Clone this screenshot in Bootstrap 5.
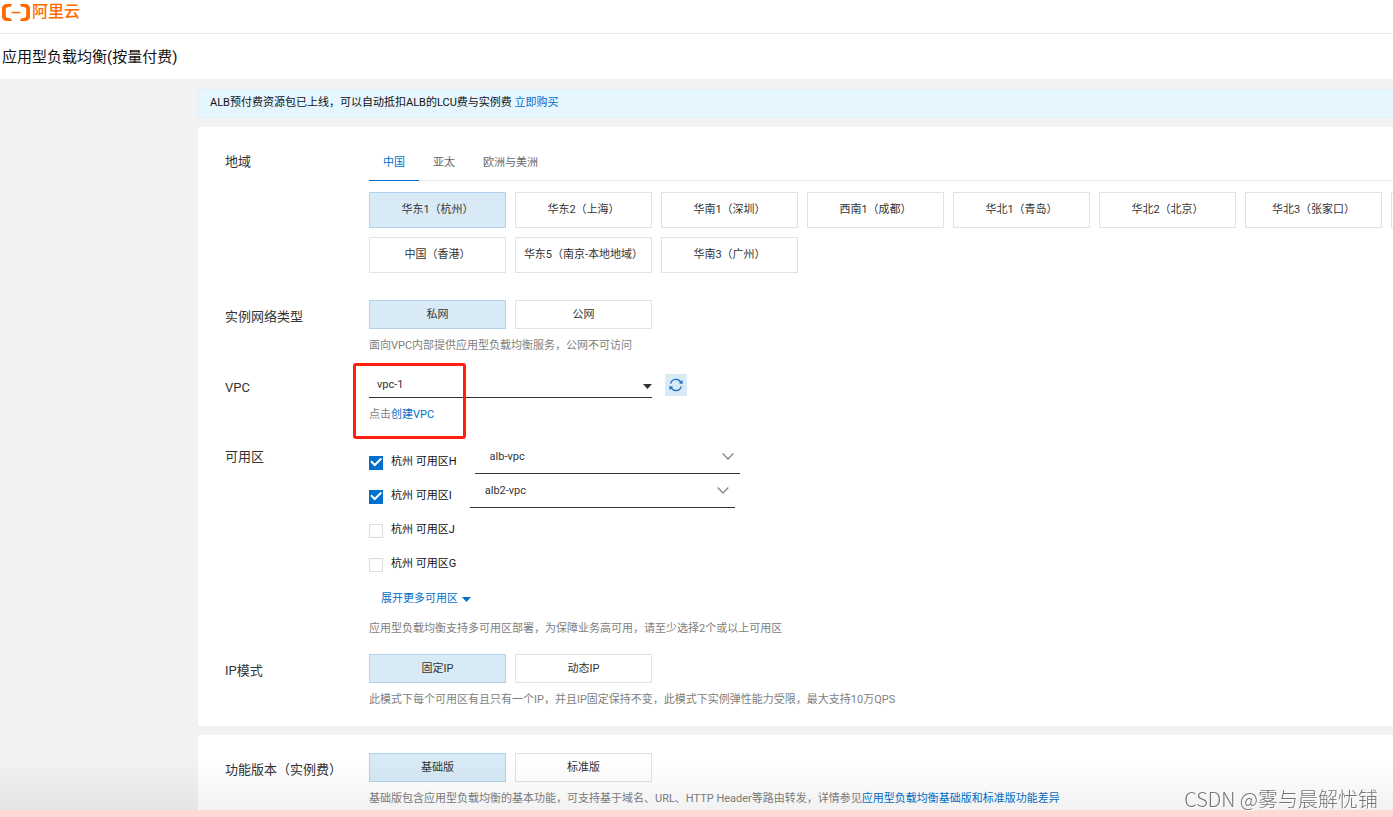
<!DOCTYPE html>
<html lang="zh-CN">
<head>
<meta charset="utf-8">
<meta name="viewport" content="width=device-width, initial-scale=1">
<title>应用型负载均衡(按量付费)</title>
<link href="https://cdn.jsdelivr.net/npm/bootstrap@5.3.0/dist/css/bootstrap.min.css" rel="stylesheet">
<script defer src="https://cdn.jsdelivr.net/npm/bootstrap@5.3.0/dist/js/bootstrap.bundle.min.js"></script>
<style>
  body { font: 11px/20px Roboto, "Noto Sans CJK SC", sans-serif; color: #333; background: #f1f2f4; overflow-x: hidden; }
  a { color: #0070cc; text-decoration: none; }
  .site-head { height: 34px; border-bottom: 1px solid #ebebeb; padding-left: 2px; }
  .brand { color: #ff6a00; font-size: 16px; font-weight: 500; line-height: 24px; gap: 2px; }
  .page-title { font-size: 15px; line-height: 43px; padding: 2px 0 0 2px; color: #111; font-weight: 400; }
  .content-area { margin-left: 198px; padding-top: 10px; gap: 9px; overflow: hidden; }
  .notice { background: #e5f6ff; border: 1px solid #e3edf2; border-right: 0; padding: 3px 11px 4px; color: #111; }
  .panel { background: #fff; padding: 17px 0 16px 27px; }
  .panel-edition { padding: 18px 0 0 27px; }
  .form-line { display: flex; margin-bottom: 15px; }
  .form-line.region-line { margin-bottom: 27px; }
  .form-line:last-child { margin-bottom: 0; }
  .field-label { width: 144px; font-size: 13px; padding-top: 7px; color: #333; }
  .region-line .field-label { padding-top: 8px; }
  .field-body { min-width: 0; }
  .region-tabs { border-bottom: 1px solid #e6e8eb; margin-bottom: 11px; }
  .region-tabs .nav-link { padding: 2px 14px 0; line-height: 34px; color: #666; border-radius: 0; margin-bottom: -1px; border-bottom: 1px solid transparent; }
  .region-tabs .nav-link.active { color: #0070cc; border-color: #0070cc; }
  .tile-grid { display: grid; grid-template-columns: repeat(8, 137px); gap: 9px; }
  .tile { height: 29px; padding: 0; border: 1px solid #e1e2e3; border-radius: 0; background: #fff; color: #333; font-size: 11px; line-height: 20px; }
  .tile.active { background: #d8eaf6 !important; border-color: #b1d2ec !important; color: #333 !important; }
  .tile-tall .tile { height: 36px; }
  .hint { color: #808080; margin: 7px 0 0; }
  .line-select { border: 0; border-bottom: 1px solid #333; border-radius: 0; font-size: 11px; line-height: 20px; color: #333; background-color: transparent; }
  .vpc-select { width: 283px; height: 27px; padding: 1px 20px 0 8px; background-size: 9px 5px; background-position: right 0 top 13px;
    background-image: url("data:image/svg+xml,%3Csvg xmlns='http://www.w3.org/2000/svg' viewBox='0 0 9 5'%3E%3Cpath fill='%23333' d='M0 0h9L4.5 5z'/%3E%3C/svg%3E"); }
  .zone-select { width: 265px; height: 34px; padding: 0 24px 0 15px; margin-left: 18px; background-size: 12px 7px; background-position: right 6px center;
    background-image: url("data:image/svg+xml,%3Csvg xmlns='http://www.w3.org/2000/svg' viewBox='0 0 12 7'%3E%3Cpath fill='none' stroke='%23888' stroke-width='1.4' d='M.7.6 6 6 11.300.6'/%3E%3C/svg%3E"); }
  .refresh { width: 22px; height: 22px; background: #d8eaf6; color: #1a6fc4; border: 0; border-radius: 0; margin: 3px 0 0 13px; padding: 0; }
  .highlight { position: absolute; inset: -8px auto -14px -16px; width: 113px; border: 3px solid #ff2010; border-radius: 3px; pointer-events: none; }
  .zone-row { height: 34px; }
  .zone-row label { padding-top: 12px; color: #111; }
  .zone-box { width: 14px; height: 14px; margin: 16px 8px 0 0; border: 1px solid #dcdcdc; border-radius: 0 !important; }
  .zone-box:checked { background-color: #0070cc; border-color: #0070cc; background-size: 12px 12px;
    background-image: url("data:image/svg+xml,%3Csvg xmlns='http://www.w3.org/2000/svg' viewBox='0 0 12 12'%3E%3Cpath fill='none' stroke='%23fff' stroke-width='2' d='M1 4.300 4.800 8 11.300 1.500'/%3E%3C/svg%3E"); }
  .more-zones { margin: 13px 0 10px 12px; gap: 4px; }
  .bottom-fade { height: 50px; bottom: 7px; background: linear-gradient(transparent, rgba(0,0,0,.05)); pointer-events: none; }
  .bottom-strip { height: 7px; background: #ffd9d6; }
  .watermark { position: fixed; right: 15px; bottom: 3px; font: 300 20px/30px "Noto Sans CJK SC", sans-serif; color: #757575; text-shadow: 1px 1px 0 #fff; z-index: 1040; }
</style>
</head>
<body class="min-vh-100 d-flex flex-column">
  <header class="bg-white">
    <div class="site-head">
      <a href="#" class="brand d-inline-flex align-items-center">
        <svg width="28" height="17" viewBox="0 0 28 17" fill="#ff6a00" aria-hidden="true">
          <path d="M10 0H5C2 0 0 2 0 4.800v7.400C0 15 2 17 5 17h5l-1-2.500-3.600-.8c-1-.2-1.600-.9-1.600-1.800V5.100c0-.9.6-1.600 1.600-1.800L9 2.500z"/>
          <path d="M18 0h5c3 0 5 2 5 4.800v7.400c0 2.800-2 4.800-5 4.800h-5l1-2.500 3.600-.8c1-.2 1.600-.9 1.600-1.800V5.100c0-.9-.6-1.600-1.600-1.800L19 2.500z"/>
          <path d="M9.500 7.800h9v1.500h-9z"/>
        </svg>
        <span>阿里云</span>
      </a>
    </div>
    <h1 class="page-title m-0">应用型负载均衡(按量付费)</h1>
  </header>

  <main class="content-area flex-grow-1 d-flex flex-column">
    <div class="notice">ALB预付费资源包已上线，可以自动抵扣ALB的LCU费与实例费 <a href="#">立即购买</a></div>

    <section class="panel">
      <div class="form-line region-line">
        <div class="field-label flex-shrink-0">地域</div>
        <div class="field-body flex-grow-1">
          <nav class="nav region-tabs">
            <a class="nav-link active" href="#">中国</a>
            <a class="nav-link" href="#">亚太</a>
            <a class="nav-link" href="#">欧洲与美洲</a>
          </nav>
          <div class="tile-grid tile-tall">
            <button type="button" class="btn tile active">华东1（杭州）</button>
            <button type="button" class="btn tile">华东2（上海）</button>
            <button type="button" class="btn tile">华南1（深圳）</button>
            <button type="button" class="btn tile">西南1（成都）</button>
            <button type="button" class="btn tile">华北1（青岛）</button>
            <button type="button" class="btn tile">华北2（北京）</button>
            <button type="button" class="btn tile">华北3（张家口）</button>
            <button type="button" class="btn tile"></button>
            <button type="button" class="btn tile">中国（香港）</button>
            <button type="button" class="btn tile">华东5（南京-本地地域）</button>
            <button type="button" class="btn tile">华南3（广州）</button>
          </div>
        </div>
      </div>

      <div class="form-line">
        <div class="field-label flex-shrink-0">实例网络类型</div>
        <div class="field-body">
          <div class="tile-grid">
            <button type="button" class="btn tile active">私网</button>
            <button type="button" class="btn tile">公网</button>
          </div>
          <p class="hint">面向VPC内部提供应用型负载均衡服务，公网不可访问</p>
        </div>
      </div>

      <div class="form-line">
        <label class="field-label flex-shrink-0" for="vpc">VPC</label>
        <div class="field-body position-relative">
          <div class="d-flex">
            <select id="vpc" class="form-select line-select vpc-select"><option>vpc-1</option></select>
            <button type="button" class="btn refresh d-flex align-items-center justify-content-center" aria-label="刷新">
              <svg width="14" height="14" viewBox="0 0 14 14" fill="none" stroke="currentColor" stroke-width="1.300" aria-hidden="true">
                <path d="M1.600 5.600A5.600 5.600 0 0 1 12 4.500M12.400 8.400A5.600 5.600 0 0 1 2 9.500"/>
                <path d="M13.600 2.200v3.800L9.600 4.900zM.4 11.800V8l4 1.100z" fill="currentColor" stroke="none"/>
              </svg>
            </button>
          </div>
          <p class="hint">点击<a href="#">创建VPC</a></p>
          <div class="highlight"></div>
        </div>
      </div>

      <div class="form-line">
        <div class="field-label flex-shrink-0">可用区</div>
        <div class="field-body">
          <div class="zone-row d-flex align-items-start">
            <input class="form-check-input zone-box" type="checkbox" id="zh" checked>
            <label for="zh">杭州 可用区H</label>
            <select class="form-select line-select zone-select" aria-label="可用区H"><option>alb-vpc</option></select>
          </div>
          <div class="zone-row d-flex align-items-start">
            <input class="form-check-input zone-box" type="checkbox" id="zi" checked>
            <label for="zi">杭州 可用区I</label>
            <select class="form-select line-select zone-select" aria-label="可用区I"><option>alb2-vpc</option></select>
          </div>
          <div class="zone-row d-flex align-items-start">
            <input class="form-check-input zone-box" type="checkbox" id="zj">
            <label for="zj">杭州 可用区J</label>
          </div>
          <div class="zone-row d-flex align-items-start">
            <input class="form-check-input zone-box" type="checkbox" id="zg">
            <label for="zg">杭州 可用区G</label>
          </div>
          <a href="#" class="more-zones d-flex align-items-center">展开更多可用区
            <svg width="9" height="5" viewBox="0 0 9 5" fill="currentColor" aria-hidden="true"><path d="M0 0h9L4.500 5z"/></svg>
          </a>
          <p class="hint">应用型负载均衡支持多可用区部署，为保障业务高可用，请至少选择2个或以上可用区</p>
        </div>
      </div>

      <div class="form-line">
        <div class="field-label flex-shrink-0">IP模式</div>
        <div class="field-body">
          <div class="tile-grid">
            <button type="button" class="btn tile active">固定IP</button>
            <button type="button" class="btn tile">动态IP</button>
          </div>
          <p class="hint">此模式下每个可用区有且只有一个IP，并且IP固定保持不变，此模式下实例弹性能力受限，最大支持10万QPS</p>
        </div>
      </div>
    </section>

    <section class="panel panel-edition flex-grow-1">
      <div class="form-line">
        <div class="field-label flex-shrink-0">功能版本（实例费）</div>
        <div class="field-body">
          <div class="tile-grid">
            <button type="button" class="btn tile active">基础版</button>
            <button type="button" class="btn tile">标准版</button>
          </div>
          <p class="hint">基础版包含应用型负载均衡的基本功能，可支持基于域名、URL、HTTP Header等路由转发，详情参见<a href="#">应用型负载均衡基础版和标准版功能差异</a></p>
        </div>
      </div>
    </section>
  </main>

  <div class="bottom-fade position-fixed start-0 end-0"></div>
  <div class="bottom-strip"></div>
  <div class="watermark">CSDN @雾与晨解忧铺</div>
</body>
</html>
